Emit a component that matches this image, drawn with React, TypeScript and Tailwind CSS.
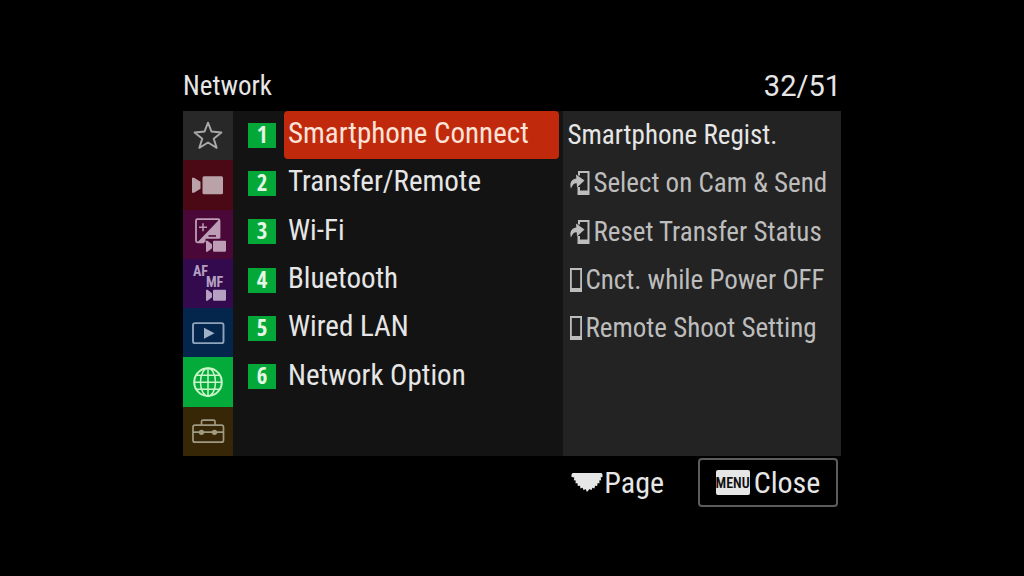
import type { ReactNode } from "react";

const StarIcon = () => (
  <path
    d="M25 11.5l3.4 8.8 10 1-7.7 6.2 3 9.2-8.7-5.3-8.7 5.3 3-9.2-7.7-6.2 10-1z"
    fill="none"
    stroke="#a8a8a8"
    strokeWidth="1.9"
    strokeLinejoin="round"
  />
);

const ShootingIcon = () => (
  <g fill="#b9a3a8">
    <rect x="19.5" y="16" width="20.5" height="18" rx="1.5" />
    <path d="M9 17.5h2l6.5 4v7l-6.5 4H9z" />
  </g>
);

const SmallCamera = () => (
  <>
    <rect x="30" y="30.5" width="13" height="11" rx="0.8" />
    <path d="M23 30.5h1.5l4.5 3.5v4l-4.5 3.5H23z" />
  </>
);

const ExposureIcon = () => (
  <g fill="#bd9db5">
    <path d="M36.5 9v19.5H22.5V32H14.5z" />
    <path
      d="M21 32.2h-6.5a1.5 1.5 0 0 1-1.5-1.5V10.5A1.5 1.5 0 0 1 14.5 9h20.5a1.5 1.5 0 0 1 1.5 1.5V28"
      fill="none"
      stroke="#bd9db5"
      strokeWidth="1.8"
    />
    <path d="M20 13v8M16 17h8" stroke="#bd9db5" strokeWidth="1.5" />
    <path d="M25.5 25.8h7.5" stroke="#4a0838" strokeWidth="1.6" />
    <SmallCamera />
  </g>
);

const FocusIcon = () => (
  <g fill="#b5a0c2">
    <text x="10" y="17" className="font-['Roboto_Condensed',sans-serif] text-[14px] font-bold">
      AF
    </text>
    <text x="23" y="28" className="font-['Roboto_Condensed',sans-serif] text-[14px] font-bold">
      MF
    </text>
    <SmallCamera />
  </g>
);

const PlaybackIcon = () => (
  <>
    <rect x="10" y="15" width="30.5" height="20" rx="2" fill="none" stroke="#8fa3bb" strokeWidth="1.9" />
    <path d="M21 19.5l10.5 5.5L21 30.5z" fill="#9fb1c6" />
  </>
);

const NetworkIcon = () => (
  <g fill="none" stroke="#c9f5c9" strokeWidth="1.5">
    <circle cx="25" cy="25" r="13.8" strokeWidth="2" />
    <ellipse cx="25" cy="25" rx="7.5" ry="13.8" />
    <path d="M25 11v28M11 25h28M13.5 18h23M13.5 32h23" />
  </g>
);

const SetupIcon = () => (
  <g fill="none" stroke="#a09a82" strokeWidth="1.7">
    <rect x="10" y="18" width="30.5" height="17" rx="2" />
    <path d="M18.5 18v-3.5a1.5 1.5 0 0 1 1.5-1.5h10.5a1.5 1.5 0 0 1 1.5 1.5V18M10 25h30.5" />
    <circle cx="18.5" cy="25.2" r="2.7" fill="#a09a82" stroke="none" />
    <circle cx="31.5" cy="25.2" r="2.7" fill="#a09a82" stroke="none" />
  </g>
);

const PhoneIcon = () => (
  <svg viewBox="0 0 12 24" className="h-6 w-3 shrink-0" fill="currentColor" aria-hidden="true">
    <path fillRule="evenodd" d="M0 0h12v24H0zM1.8 2v18h8.4V2z" />
  </svg>
);

const SendToPhoneIcon = () => (
  <svg viewBox="0 0 20 24" className="h-6 w-5 shrink-0" fill="currentColor" aria-hidden="true">
    <path d="M8 0h11.5v24H7.5v-8H10v3.5h7.5V2H10v2.5H8z" />
    <path d="M6 3.5l8.5 6L7 16.5l-.3-4.300C4 12 2.5 13.5 1 17.5c-1.800-5 .5-9.500 5.300-10z" />
  </svg>
);

const DialIcon = () => (
  <svg viewBox="0 0 32 20" className="h-5 w-8 shrink-0" fill="currentColor" aria-hidden="true">
    <path d="M1.5 0h29l1 1.5v2.5l-1.800.5.5 2.700-1.900.3.200 2.800-2-.1-.3 2.900-2.200-.4-.5 2.800-2.100-.7-1 2.500-1.900-1.200L16 19l-1.500-2.900-1.900 1.200-1-2.500-2.100.7-.5-2.800-2.200.4-.3-2.900-2 .1.200-2.800-1.900-.3.5-2.700L.5 4V1.500z" />
  </svg>
);

type Tab = { label: string; tile: string; icon: ReactNode };

const tabs: Tab[] = [
  { label: "My Menu", tile: "bg-[#282828]", icon: <StarIcon /> },
  { label: "Shooting", tile: "bg-[#4a0914]", icon: <ShootingIcon /> },
  { label: "Exposure/Color", tile: "bg-[#4a0838]", icon: <ExposureIcon /> },
  { label: "Focus", tile: "bg-[#330a4e]", icon: <FocusIcon /> },
  { label: "Playback", tile: "bg-[#04264c]", icon: <PlaybackIcon /> },
  { label: "Network", tile: "bg-[#04ab3b]", icon: <NetworkIcon /> },
  { label: "Setup", tile: "bg-[#372706]", icon: <SetupIcon /> },
];

const groups = ["Smartphone Connect", "Transfer/Remote", "Wi-Fi", "Bluetooth", "Wired LAN", "Network Option"];

const settings: { label: string; icon?: ReactNode }[] = [
  { label: "Smartphone Regist." },
  { label: "Select on Cam & Send", icon: <SendToPhoneIcon /> },
  { label: "Reset Transfer Status", icon: <SendToPhoneIcon /> },
  { label: "Cnct. while Power OFF", icon: <PhoneIcon /> },
  { label: "Remote Shoot Setting", icon: <PhoneIcon /> },
];

const App = () => {
  return (
    <div className="flex min-h-screen flex-col justify-center bg-black px-[183px] font-['Roboto_Condensed','Liberation_Sans',sans-serif] text-[#e6e6e6]">
      {/* Title bar */}
      <header className="flex items-center justify-between pb-2">
        <h1 className="text-[27px] leading-[34px]">Network</h1>
        <span className="font-['Roboto',sans-serif] text-[29px] leading-[34px]">32/51</span>
      </header>

      <main className="grid min-h-[345px] grid-cols-[50px_minmax(0,25fr)_minmax(0,21fr)]">
        {/* Category tabs */}
        <nav className="grid auto-rows-fr">
          {tabs.map((tab) => (
            <button key={tab.label} type="button" aria-label={tab.label} className={tab.tile}>
              <svg viewBox="0 0 50 49" className="h-full w-full" aria-hidden="true">
                {tab.icon}
              </svg>
            </button>
          ))}
        </nav>

        {/* Groups */}
        <ul className="grid grid-rows-6 bg-[#131313] pr-1 pb-[55px] pl-[15px]">
          {groups.map((group, i) => (
            <li key={group} className="flex items-center gap-2">
              <span className="flex h-[25px] w-7 shrink-0 items-center justify-center bg-[#04a838] pb-[3px] font-['Open_Sans_Condensed','Noto_Sans',sans-serif] text-[23px] leading-[22px] font-semibold text-[#e4f7e4]">
                {i + 1}
              </span>
              <button
                type="button"
                className={
                  i === 0
                    ? "h-full flex-1 rounded-sm bg-[#c0290b] px-1 pb-1 text-left text-[29px] leading-9 whitespace-nowrap text-[#fde3d8]"
                    : "h-full flex-1 px-1 pb-1 text-left text-[29px] leading-9 whitespace-nowrap"
                }
              >
                {group}
              </button>
            </li>
          ))}
        </ul>

        {/* Settings of the selected group */}
        <ul className="grid grid-rows-6 bg-[#232323] pb-[55px] pl-1">
          {settings.map((setting) => (
            <li key={setting.label}>
              <button
                type="button"
                className={
                  setting.icon
                    ? "flex h-full w-full items-center gap-[3px] pl-[3px] text-left text-[27px] leading-8 whitespace-nowrap text-[#bdbdbd]"
                    : "flex h-full w-full items-center text-left text-[27px] leading-8 whitespace-nowrap"
                }
              >
                {setting.icon}
                {setting.label}
              </button>
            </li>
          ))}
        </ul>
      </main>

      {/* Key guide */}
      <footer className="flex items-center justify-end gap-[34px] pt-[2px] pr-[3px] text-[30px] leading-9">
        <button type="button" className="flex items-center gap-px">
          <DialIcon />
          Page
        </button>
        <button type="button" className="flex h-[49px] w-[140px] items-center justify-center gap-1 rounded-sm border-2 border-[#5c5c5c]">
          <span className="flex h-[25px] w-[34px] items-center justify-center rounded-xs bg-[#e6e6e6] text-[14px] font-semibold text-[#111111]">
            MENU
          </span>
          Close
        </button>
      </footer>
    </div>
  );
};

export default App;
